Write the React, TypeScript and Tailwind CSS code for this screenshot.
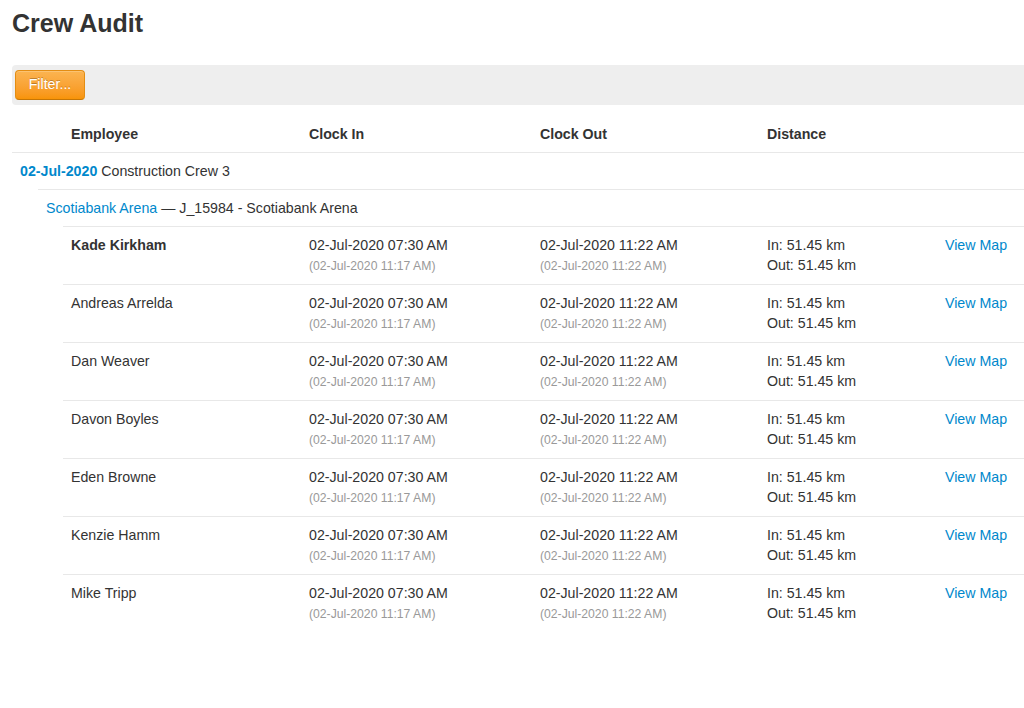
const crew = [
  "Kade Kirkham",
  "Andreas Arrelda",
  "Dan Weaver",
  "Davon Boyles",
  "Eden Browne",
  "Kenzie Hamm",
  "Mike Tripp",
];

const cols = "grid grid-cols-[238px_231px_227px_178px_1fr]";

function AuditRow({ name, first }: { name: string; first: boolean }) {
  return (
    <div className={`${cols} border-t border-[#e8e8e8] py-2 leading-5`}>
      <div className={`px-2 ${first ? "font-bold" : ""}`}>{name}</div>
      <div className="px-2">
        <div>02-Jul-2020 07:30 AM</div>
        <div className="mt-[2px] text-[12.2px] leading-[19px] text-[#999]">
          (02-Jul-2020 11:17 AM)
        </div>
      </div>
      <div className="px-2">
        <div>02-Jul-2020 11:22 AM</div>
        <div className="mt-[2px] text-[12.2px] leading-[19px] text-[#999]">
          (02-Jul-2020 11:22 AM)
        </div>
      </div>
      <div className="px-2">
        <div>In: 51.45 km</div>
        <div className="leading-[21px]">Out: 51.45 km</div>
      </div>
      <div className="px-2">
        <a href="#" className="text-[#0088cc]">
          View Map
        </a>
      </div>
    </div>
  );
}

export default function App() {
  return (
    <div
      className="min-h-screen bg-white pl-3 text-[14.2px] text-[#333]"
      style={{ fontFamily: '"Liberation Sans", Arial, sans-serif' }}
    >
      <h1 className="pt-2 text-[25px] font-bold leading-[31px]">
        Crew Audit
      </h1>

      <div className="mt-[26px] h-10 rounded-l bg-[#eeeeee] pl-[3px] pt-[5px]">
        <button
          type="button"
          className="h-[30px] w-[70px] rounded border border-[#e38d13] border-b-[#c67605] bg-gradient-to-b from-[#fbb450] to-[#f89406] text-white shadow-[inset_0_1px_0_rgba(255,255,255,0.2)] [text-shadow:0_-1px_0_rgba(0,0,0,0.25)]"
        >
          Filter...
        </button>
      </div>

      <div className="mt-[11px]">
        <div className="flex border-b border-[#e8e8e8] py-2 font-bold leading-5">
          <div className="w-[51px] shrink-0" />
          <div className={`${cols} flex-1`}>
            <div className="px-2">Employee</div>
            <div className="px-2">Clock In</div>
            <div className="px-2">Clock Out</div>
            <div className="px-2">Distance</div>
            <div />
          </div>
        </div>

        <div className="px-2 py-2 leading-5">
          <a href="#" className="font-bold text-[#0088cc]">
            02-Jul-2020
          </a>{" "}
          Construction Crew 3
        </div>

        <div className="ml-[26px]">
          <div className="border-t border-[#e8e8e8] px-2 py-2 leading-5">
            <a href="#" className="text-[#0088cc]">
              Scotiabank Arena
            </a>{" "}
            — J_15984 - Scotiabank Arena
          </div>

          <div className="ml-[25px]">
            {crew.map((name, i) => (
              <AuditRow key={name} name={name} first={i === 0} />
            ))}
          </div>
        </div>
      </div>
    </div>
  );
}
